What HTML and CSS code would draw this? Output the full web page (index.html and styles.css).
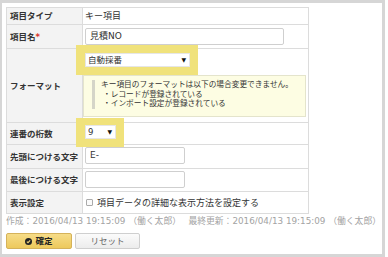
FILE: index.html
```html
<!DOCTYPE html>
<html lang="ja">
<head>
<meta charset="utf-8">
<link rel="stylesheet" href="styles.css">
</head>
<body>
<div class="frame">
  <table class="form">
    <tr>
      <th><div class="lab h16">項目タイプ</div></th>
      <td><div class="v h16">キー項目</div></td>
    </tr>
    <tr>
      <th><div class="lab h23">項目名<span class="req">*</span></div></th>
      <td><div class="v h23 top3"><div class="text-input wide">見積NO</div></div></td>
    </tr>
    <tr>
      <th><div class="lab h73">フォーマット</div></th>
      <td>
        <div class="v h73 block">
          <div class="hl hl-format">
            <div class="select select-wide"><span>自動採番</span><span class="arrow">▼</span></div>
          </div>
          <div class="note">
            <div class="note-inner">
              <p>キー項目のフォーマットは以下の場合変更できません。</p>
              <p class="sub">・レコードが登録されている</p>
              <p class="sub">・インポート設定が登録されている</p>
            </div>
          </div>
        </div>
      </td>
    </tr>
    <tr>
      <th><div class="lab h21">連番の桁数</div></th>
      <td>
        <div class="v h21 block">
          <div class="hl hl-digits">
            <div class="select select-narrow"><span>9</span><span class="arrow">▼</span></div>
          </div>
        </div>
      </td>
    </tr>
    <tr>
      <th><div class="lab h23">先頭につける文字</div></th>
      <td><div class="v h23 top2"><div class="text-input short">E-</div></div></td>
    </tr>
    <tr>
      <th><div class="lab h22">最後につける文字</div></th>
      <td><div class="v h22 top2"><div class="text-input short"></div></div></td>
    </tr>
    <tr>
      <th><div class="lab h21">表示設定</div></th>
      <td><div class="v h21"><span class="checkbox"></span>項目データの詳細な表示方法を設定する</div></td>
    </tr>
  </table>
  <div class="meta">
    <span>作成：2016/04/13 19:15:09 （働く太郎）</span>
    <span>最終更新：2016/04/13 19:15:09 （働く太郎）</span>
  </div>
  <div class="buttons">
    <button class="btn btn-ok"><svg class="ok-icon" viewBox="0 0 10 10" width="7" height="7"><circle cx="5" cy="5" r="5" fill="#222"/><path d="M2.6 5.1 L4.3 6.7 L7.4 3.4" fill="none" stroke="#f2d479" stroke-width="1.6"/></svg>確定</button>
    <button class="btn btn-reset">リセット</button>
  </div>
</div>
</body>
</html>
```

FILE: styles.css
```css
* { box-sizing: border-box; }
html, body { margin: 0; padding: 0; background: #fff; }
body {
  font-family: "DejaVu Sans", "Noto Sans CJK JP", sans-serif;
  font-size: 9px;
  color: #333;
}
.frame {
  width: 385px;
  height: 257px;
  border: 3px solid #d6d6d6;
  border-left-width: 2px;
  padding: 4px 1px 0 4px;
}
.form {
  border-collapse: collapse;
  width: 303px;
}
.form th, .form td {
  border: 1px solid #dcdcdc;
  padding: 0;
  vertical-align: top;
  text-align: left;
}
.form th {
  width: 76px;
  background: #f3f3f3;
  font-weight: bold;
}
.lab {
  display: flex;
  align-items: center;
  padding-left: 3px;
  white-space: nowrap;
  line-height: 12px;
  font-size: 8.5px;
}
.v {
  display: flex;
  align-items: center;
  padding-left: 2px;
  line-height: 12px;
  white-space: nowrap;
}
.v.block { display: block; }
.v.top3 { align-items: flex-start; padding-top: 3px; }
.v.top2 { align-items: flex-start; padding-top: 2px; }
.h16 { height: 16px; }
.h21 { height: 21px; }
.h22 { height: 22px; }
.h23 { height: 23px; }
.h73 { height: 73px; }
.req { color: #d9352b; }
.text-input {
  height: 17px;
  border: 1px solid #cfcfcf;
  border-radius: 2px;
  padding: 0 4px;
  line-height: 15px;
  background: #fff;
}
.text-input.wide { width: 199px; }
.text-input.short { width: 100px; }
.hl {
  position: relative;
  background: #f0e27b;
  width: fit-content;
}
.hl-format { margin: -4px 0 0 -9px; padding: 8px 8px 8px 9px; }
.hl-digits { margin: -5px 0 0 -9px; padding: 7px 8px 8px 9px; }
.select {
  height: 14px;
  background: #fff;
  border: 1px solid #e6e6e6;
  display: flex;
  align-items: center;
  justify-content: space-between;
  padding: 0 3px 0 2px;
  line-height: 12px;
  font-size: 8.5px;
}
.select-wide { width: 105px; }
.select-narrow { width: 31px; }
.arrow { font-size: 6px; color: #111; }
.note {
  background: #fdfde3;
  border: 1px solid #e4e4cc;
  width: 223px;
  height: 42px;
  margin-left: -2px;
  padding: 4px 0 0 8px;
}
.note-inner {
  border-left: 3px solid #d5d5c8;
  padding-left: 6px;
  font-size: 7.7px;
  line-height: 9.5px;
}
.note p { margin: 0; }
.note p.sub { padding-left: 2px; }
.checkbox {
  display: inline-block;
  width: 7px;
  height: 7px;
  border: 1px solid #aaa;
  border-radius: 1px;
  background: #fafafa;
  margin: 0 4px 0 1px;
}
.meta {
  display: flex;
  justify-content: space-between;
  color: #a3a3a3;
  font-size: 8.8px;
  line-height: 10px;
  margin-top: 2px;
}
.buttons {
  display: flex;
  gap: 3px;
  margin-top: 7px;
}
.btn {
  height: 16px;
  width: 66px;
  border-radius: 2px;
  font-family: inherit;
  font-size: 8.5px;
  line-height: 14px;
  padding: 0;
  display: flex;
  align-items: center;
  justify-content: center;
  gap: 3px;
}
.btn-ok {
  background: linear-gradient(#f6dc88, #edc95c);
  border: 1px solid #d5b25a;
  color: #222;
  font-weight: bold;
}
.btn-reset {
  width: 65px;
  background: linear-gradient(#fbfbfb, #ececec);
  border: 1px solid #cfcfcf;
  color: #666;
}
```
